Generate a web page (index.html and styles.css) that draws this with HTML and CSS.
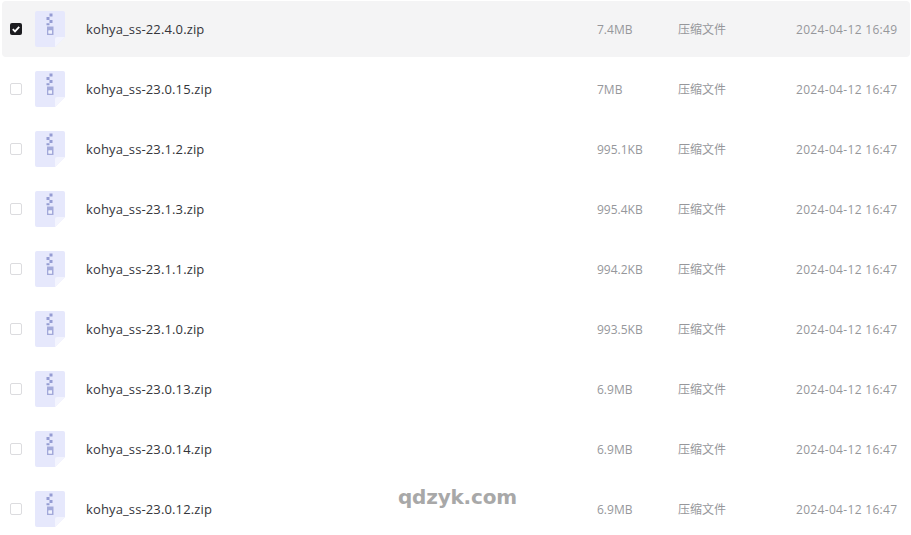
FILE: index.html
```html
<!DOCTYPE html>
<html lang="en">

<head>
  <meta charset="UTF-8">
  <title>Files</title>
  <link rel="stylesheet" href="styles.css">
</head>

<body>
  <svg class="defs" width="0" height="0">
    <symbol id="zip" viewBox="0 0 30 36">
      <path d="M2 0H28a2 2 0 0 1 2 2V26L20 36H2a2 2 0 0 1-2-2V2a2 2 0 0 1 2-2Z" fill="#e6e8fc" />
      <path d="M30 26L20 36V28a2 2 0 0 1 2-2Z" fill="#f3f4fe" />
      <path d="M14.500 2.500h3v3h-3zM11.500 6h3v3h-3zM14.500 9h3v3h-3zM11.500 12.200h3v2h-3z" fill="#959cd3" />
      <path d="M12 15.500h6.500v8.500H12zM13.500 19.500v3h3.500v-3z" fill="#a3a9da" fill-rule="evenodd" />
      <path d="M13.500 19.500h3.500v3h-3.500z" fill="#eef0fd" />
    </symbol>
  </svg>
  <div class="list">
    <div class="row selected">
      <span class="check"><svg width="12" height="12" viewBox="0 0 12 12"><path d="M2.800 6.200l2.200 2.200 4.200-4.600" fill="none" stroke="#fff" stroke-width="1.800" /></svg></span>
      <svg class="icon"><use href="#zip" /></svg>
      <span class="name">kohya_ss-22.4.0.zip</span>
      <span class="size">7.4MB</span>
      <span class="type">压缩文件</span>
      <span class="date">2024-04-12 16:49</span>
    </div>
    <div class="row">
      <span class="check"></span>
      <svg class="icon"><use href="#zip" /></svg>
      <span class="name">kohya_ss-23.0.15.zip</span>
      <span class="size">7MB</span>
      <span class="type">压缩文件</span>
      <span class="date">2024-04-12 16:47</span>
    </div>
    <div class="row">
      <span class="check"></span>
      <svg class="icon"><use href="#zip" /></svg>
      <span class="name">kohya_ss-23.1.2.zip</span>
      <span class="size">995.1KB</span>
      <span class="type">压缩文件</span>
      <span class="date">2024-04-12 16:47</span>
    </div>
    <div class="row">
      <span class="check"></span>
      <svg class="icon"><use href="#zip" /></svg>
      <span class="name">kohya_ss-23.1.3.zip</span>
      <span class="size">995.4KB</span>
      <span class="type">压缩文件</span>
      <span class="date">2024-04-12 16:47</span>
    </div>
    <div class="row">
      <span class="check"></span>
      <svg class="icon"><use href="#zip" /></svg>
      <span class="name">kohya_ss-23.1.1.zip</span>
      <span class="size">994.2KB</span>
      <span class="type">压缩文件</span>
      <span class="date">2024-04-12 16:47</span>
    </div>
    <div class="row">
      <span class="check"></span>
      <svg class="icon"><use href="#zip" /></svg>
      <span class="name">kohya_ss-23.1.0.zip</span>
      <span class="size">993.5KB</span>
      <span class="type">压缩文件</span>
      <span class="date">2024-04-12 16:47</span>
    </div>
    <div class="row">
      <span class="check"></span>
      <svg class="icon"><use href="#zip" /></svg>
      <span class="name">kohya_ss-23.0.13.zip</span>
      <span class="size">6.9MB</span>
      <span class="type">压缩文件</span>
      <span class="date">2024-04-12 16:47</span>
    </div>
    <div class="row">
      <span class="check"></span>
      <svg class="icon"><use href="#zip" /></svg>
      <span class="name">kohya_ss-23.0.14.zip</span>
      <span class="size">6.9MB</span>
      <span class="type">压缩文件</span>
      <span class="date">2024-04-12 16:47</span>
    </div>
    <div class="row">
      <span class="check"></span>
      <svg class="icon"><use href="#zip" /></svg>
      <span class="name">kohya_ss-23.0.12.zip</span>
      <span class="size">6.9MB</span>
      <span class="type">压缩文件</span>
      <span class="date">2024-04-12 16:47</span>
    </div>
  </div>
  <div class="watermark">qdzyk.com</div>
</body>

</html>
```

FILE: styles.css
```css
* {
  padding: 0;
  margin: 0;
  box-sizing: border-box;
}

html,
body {
  height: 100%;
  overflow: hidden;
}

body {
  position: relative;
  background: #fff;
  font-family: "Open Sans", "Noto Sans CJK SC", sans-serif;
  font-size: 12px;
  color: #96979b;
}

.defs {
  display: block;
  height: 0;
}

.list {
  display: flex;
  flex-direction: column;
  gap: 4px;
  padding: 1px 1px 0 2px;
}

.row {
  display: flex;
  align-items: center;
  flex: none;
  height: 56px;
  padding-left: 8px;
  border-radius: 4px;
}

.row.selected {
  background: #f4f4f5;
}

.check {
  display: flex;
  align-items: center;
  justify-content: center;
  flex: none;
  width: 12px;
  height: 12px;
  border: 1px solid #dcdcdf;
  border-radius: 2px;
  background: #fff;
}

.selected .check {
  border: none;
  background: #1c1c20;
}

.icon {
  flex: none;
  width: 30px;
  height: 36px;
  margin: 0 21px 0 13px;
}

.name {
  width: 511px;
  font-size: 13px;
  letter-spacing: 0.13px;
  color: #34353a;
}

.size {
  width: 81px;
}

.type {
  width: 118px;
}

.date {
  white-space: nowrap;
  letter-spacing: 0.32px;
}

.watermark {
  position: absolute;
  left: 398px;
  top: 485px;
  font-family: "DejaVu Sans", sans-serif;
  font-size: 20px;
  font-weight: 700;
  letter-spacing: -0.2px;
  color: #a8a8a8;
}
```
